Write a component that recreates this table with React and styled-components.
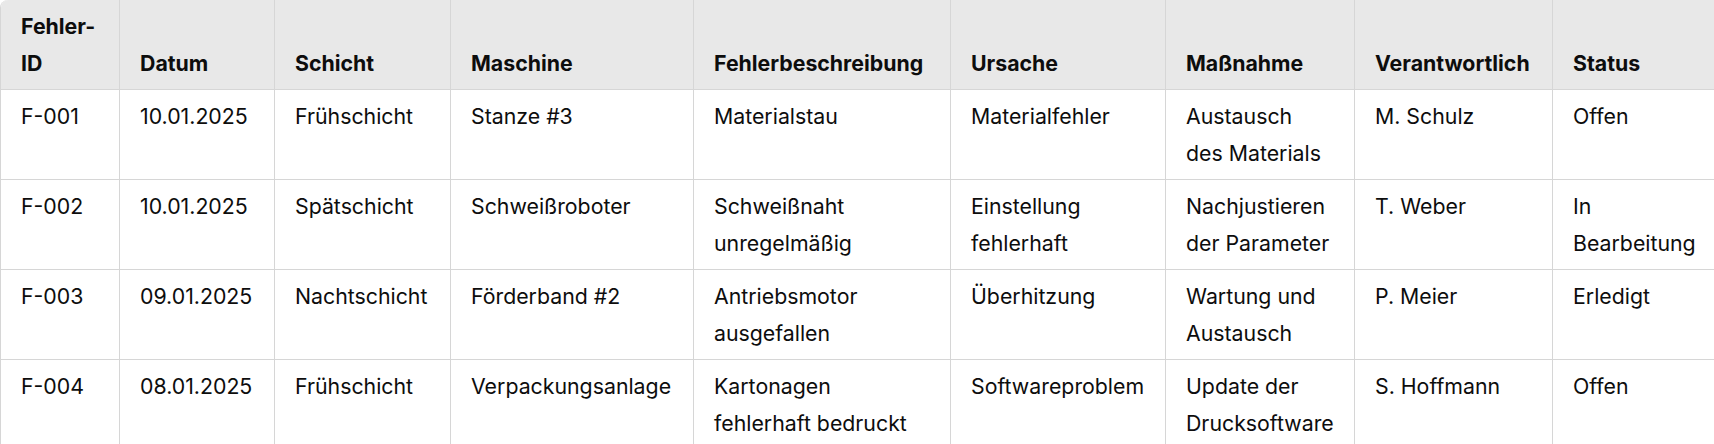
import React from "react";
import styled, { createGlobalStyle } from "styled-components";

const GlobalStyle = createGlobalStyle`
  html, body {
    margin: 0;
    padding: 0;
    background: #ffffff;
    overflow: hidden;
  }
  body {
    font-family: Inter, "Noto Sans", "Liberation Sans", sans-serif;
    color: #0d0d0d;
  }
`;

const TableFrame = styled.div`
  width: 1718px;
  border-left: 1px solid #d6d6d6;
  border-top-left-radius: 8px;
  overflow: hidden;
`;

const Table = styled.table`
  width: 100%;
  table-layout: fixed;
  border-collapse: separate;
  border-spacing: 0;
  font-size: 21.3px;
  line-height: 37px;
`;

const Col = styled.col`
  width: ${(p) => p.$w}px;
`;

const HeadCell = styled.th`
  background: #e8e8e8;
  font-weight: 700;
  text-align: left;
  vertical-align: bottom;
  padding: 8px 14px 7px 20px;
  border-right: 1px solid #d6d6d6;
  border-bottom: 1px solid #d6d6d6;
`;

const Cell = styled.td`
  font-weight: 400;
  vertical-align: top;
  padding: 8px 14px 7px 20px;
  border-right: 1px solid #d6d6d6;
  border-bottom: 1px solid #d6d6d6;
`;

const columns = [
  { label: "Fehler-ID", width: 119 },
  { label: "Datum", width: 155 },
  { label: "Schicht", width: 176 },
  { label: "Maschine", width: 243 },
  { label: "Fehlerbeschreibung", width: 257 },
  { label: "Ursache", width: 215 },
  { label: "Maßnahme", width: 189 },
  { label: "Verantwortlich", width: 198 },
  { label: "Status", width: 166 },
];

// non-breaking spaces keep the last two words together, as in the source table
const rows = [
  ["F-001", "10.01.2025", "Frühschicht", "Stanze #3", "Materialstau", "Materialfehler", "Austausch des\u00a0Materials", "M. Schulz", "Offen"],
  ["F-002", "10.01.2025", "Spätschicht", "Schweißroboter", "Schweißnaht unregelmäßig", "Einstellung fehlerhaft", "Nachjustieren der Parameter", "T. Weber", "In Bearbeitung"],
  ["F-003", "09.01.2025", "Nachtschicht", "Förderband #2", "Antriebsmotor ausgefallen", "Überhitzung", "Wartung und Austausch", "P. Meier", "Erledigt"],
  ["F-004", "08.01.2025", "Frühschicht", "Verpackungsanlage", "Kartonagen fehlerhaft\u00a0bedruckt", "Softwareproblem", "Update der Drucksoftware", "S. Hoffmann", "Offen"],
];

export default function App() {
  return (
    <>
      <GlobalStyle />
      <TableFrame>
        <Table>
          <colgroup>
            {columns.map((c) => (
              <Col key={c.label} $w={c.width} />
            ))}
          </colgroup>
          <thead>
            <tr>
              {columns.map((c) => (
                <HeadCell key={c.label}>{c.label}</HeadCell>
              ))}
            </tr>
          </thead>
          <tbody>
            {rows.map((row) => (
              <tr key={row[0]}>
                {row.map((value, i) => (
                  <Cell key={i}>{value}</Cell>
                ))}
              </tr>
            ))}
          </tbody>
        </Table>
      </TableFrame>
    </>
  );
}
